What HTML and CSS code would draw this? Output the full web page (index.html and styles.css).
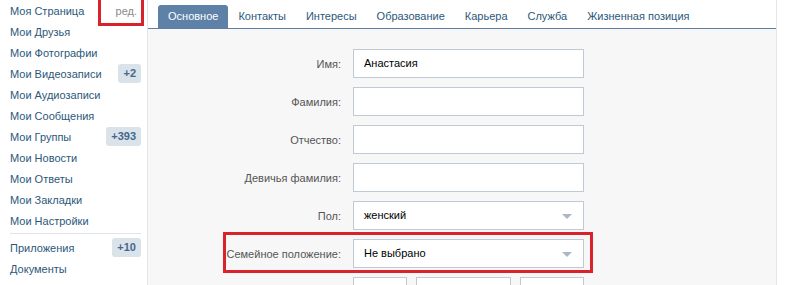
FILE: index.html
```html
<!DOCTYPE html>
<html lang="ru">
<head>
    <meta charset="UTF-8">
    <title>Редактирование страницы</title>
    <link rel="stylesheet" href="styles.css">
</head>
<body>

    <div class="page">
        <div class="side-menu">
            <div class="menu-item">
                <span>Моя Страница</span>
                <span class="edit-link">ред.</span>
                <div class="mark mark-edit"></div>
            </div>
            <div class="menu-item"><span>Мои Друзья</span></div>
            <div class="menu-item"><span>Мои Фотографии</span></div>
            <div class="menu-item"><span>Мои Видеозаписи</span><span class="badge">+2</span></div>
            <div class="menu-item"><span>Мои Аудиозаписи</span></div>
            <div class="menu-item"><span>Мои Сообщения</span></div>
            <div class="menu-item"><span>Мои Группы</span><span class="badge">+393</span></div>
            <div class="menu-item"><span>Мои Новости</span></div>
            <div class="menu-item"><span>Мои Ответы</span></div>
            <div class="menu-item"><span>Мои Закладки</span></div>
            <div class="menu-item"><span>Мои Настройки</span></div>
            <div class="menu-sep"></div>
            <div class="menu-item"><span>Приложения</span><span class="badge">+10</span></div>
            <div class="menu-item"><span>Документы</span></div>
        </div>

        <div class="panel">
            <div class="tabs">
                <div class="tab active">Основное</div>
                <div class="tab">Контакты</div>
                <div class="tab">Интересы</div>
                <div class="tab">Образование</div>
                <div class="tab">Карьера</div>
                <div class="tab">Служба</div>
                <div class="tab">Жизненная позиция</div>
            </div>

            <div class="form">
                <div class="row">
                    <label>Имя:</label>
                    <div class="field">Анастасия</div>
                </div>
                <div class="row">
                    <label>Фамилия:</label>
                    <div class="field"></div>
                </div>
                <div class="row">
                    <label>Отчество:</label>
                    <div class="field"></div>
                </div>
                <div class="row">
                    <label>Девичья фамилия:</label>
                    <div class="field"></div>
                </div>
                <div class="row">
                    <label>Пол:</label>
                    <div class="field select">женский<span class="arrow"></span></div>
                </div>
                <div class="row marked">
                    <label>Семейное положение:</label>
                    <div class="field select">Не выбрано<span class="arrow"></span></div>
                    <div class="mark mark-row"></div>
                </div>
                <div class="row">
                    <label></label>
                    <div class="date">
                        <div class="field day"></div>
                        <div class="field month"></div>
                        <div class="field year"></div>
                    </div>
                </div>
            </div>
        </div>
    </div>

</body>
</html>
```

FILE: styles.css
```css
* {
    margin: 0;
    padding: 0;
    box-sizing: border-box;
}

body {
    font-family: 'Liberation Sans', Arial, sans-serif;
    font-size: 11px;
    background-color: #fff;
    color: #000;
    height: 285px;
    overflow: hidden;
}

.page {
    display: flex;
    height: 285px;
    overflow: hidden;
}

/* Left menu */
.side-menu {
    width: 147px;
    padding-left: 10px;
    padding-right: 6px;
    flex-shrink: 0;
}

.menu-item {
    position: relative;
    display: flex;
    justify-content: space-between;
    align-items: center;
    height: 21px;
    color: #2b587a;
}

.edit-link {
    color: #8a8a8a;
    margin-right: 4px;
}

.badge {
    background-color: #dae2ea;
    color: #45688e;
    font-weight: bold;
    height: 19px;
    line-height: 19px;
    padding: 0 5px;
    border-radius: 3px;
}

.menu-sep {
    height: 1px;
    background-color: #dfe2e8;
    margin: 2px 0 3px 0;
}

/* Red annotation frames */
.mark {
    position: absolute;
    border: 3px solid #d8232c;
}

.mark-edit {
    left: 88px;
    top: -3px;
    width: 46px;
    height: 29px;
}

.mark-row {
    left: 75px;
    top: -7px;
    width: 370px;
    height: 41px;
}

/* Panel */
.panel {
    width: 630px;
    height: 285px;
    overflow: hidden;
    border-left: 1px solid #e3e6ea;
    border-right: 1px solid #e3e6ea;
    background-color: #f7f7f7;
}

.tabs {
    display: flex;
    height: 29px;
    padding: 5px 0 0 10px;
    background-color: #fff;
    border-bottom: 1px solid #5f7fa2;
}

.tab {
    padding: 0 10px;
    line-height: 23px;
    color: #2b587a;
    border-radius: 3px 3px 0 0;
}

.tab.active {
    background-color: #5e81a8;
    color: #fff;
}

/* Form */
.form {
    padding-top: 20px;
}

.row {
    position: relative;
    display: flex;
    align-items: center;
    margin-bottom: 9px;
}

.row label {
    width: 193px;
    text-align: right;
    margin-right: 12px;
    color: #555;
}

.field {
    position: relative;
    width: 231px;
    height: 29px;
    line-height: 27px;
    padding-left: 10px;
    background-color: #fff;
    border: 1px solid #c0cad5;
    color: #000;
}

.arrow {
    position: absolute;
    right: 11px;
    top: 12px;
    border-left: 5px solid transparent;
    border-right: 5px solid transparent;
    border-top: 5px solid #adb7c2;
}

.date {
    display: flex;
    gap: 9px;
}

.day {
    width: 54px;
}

.month {
    width: 95px;
}

.year {
    width: 64px;
}
```
